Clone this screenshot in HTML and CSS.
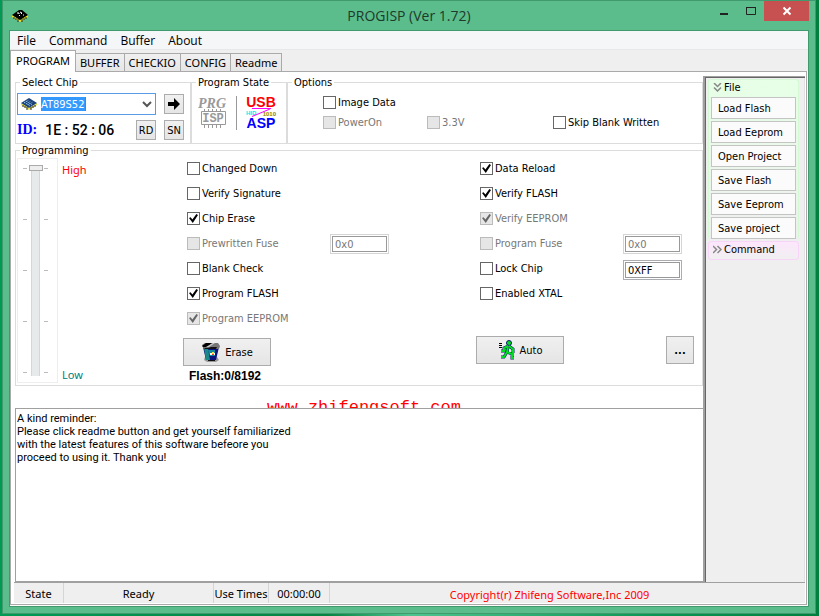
FILE: index.html
```html
<!DOCTYPE html>
<html lang="en">
<head>
<meta charset="utf-8">
<title>PROGISP (Ver 1.72)</title>
<link rel="stylesheet" href="styles.css">
</head>
<body>
<div class="window">
  <header class="titlebar">
    <svg class="app-icon" width="18" height="14" viewBox="0 0 18 14" aria-hidden="true">
      <path d="M1 6v2l8 5 8-5V6l-8 5z" fill="#f2e21c"/>
      <path d="M3 8v2M5 9v2M7 10v3M11 10v3M13 9v2M15 8v2" stroke="#222"/>
      <path d="M1 6l7-5h3l6 5-8 5z" fill="#000"/>
      <path d="M6 4h2v1M9 3l2 1-1 1M8 7l1-1M12 6h1" stroke="#fff" fill="none"/>
    </svg>
    <h1 class="title">PROGISP (Ver 1.72)</h1>
    <div class="caption-buttons">
      <button class="caption" aria-label="Minimize"><svg width="10" height="10" viewBox="0 0 10 10"><path d="M1 7h8v2H1z" fill="#222"/></svg></button>
      <button class="caption" aria-label="Maximize"><svg width="10" height="10" viewBox="0 0 10 10"><path d="M.5 1.500v7h9v-7z" fill="none" stroke="#222"/><path d="M0 1h10v1H0z" fill="#222"/></svg></button>
      <button class="caption close" aria-label="Close"><svg width="10" height="10" viewBox="0 0 10 10"><path d="M1.500 1.500l7 7M8.500 1.500l-7 7" stroke="#fff" stroke-width="2"/></svg></button>
    </div>
  </header>

  <div class="client">
    <nav class="menu">
      <a href="#">File</a><a href="#">Command</a><a href="#">Buffer</a><a href="#">About</a>
    </nav>
    <div class="tabs" role="tablist">
      <button class="tab active" role="tab" aria-selected="true">PROGRAM</button>
      <button class="tab" role="tab">BUFFER</button>
      <button class="tab" role="tab">CHECKIO</button>
      <button class="tab" role="tab">CONFIG</button>
      <button class="tab" role="tab">Readme</button>
    </div>

    <div class="page">
      <div class="workspace">
        <main class="main">
          <div class="top-groups">
            <fieldset class="group">
              <legend>Select Chip</legend>
              <div class="chip">
                <div class="chip-row">
                  <div class="combo">
                    <svg width="18" height="14" viewBox="0 0 18 14" aria-hidden="true">
                      <path d="M1 6v2l8 5 8-5V6l-8 5z" fill="#e8e23a"/>
                      <path d="M3 8v2M5 9v2M7 10v3M11 10v3M13 9v2M15 8v2" stroke="#223"/>
                      <path d="M1 6l8-5 8 5-8 5z" fill="#1c3f78"/>
                      <path d="M4 6l5-3M6 7l5-3M8 8l5-3M6 4l6 4M4 5l6 4" stroke="#8fc4ee" stroke-dasharray="1 1"/>
                    </svg>
                    <select class="chip-select" aria-label="Chip"><option>AT89S52</option></select>
                    <svg class="combo-arrow" width="10" height="8" viewBox="0 0 10 8" aria-hidden="true"><path d="M1 2l4 4 4-4" fill="none" stroke="#555" stroke-width="2"/></svg>
                  </div>
                  <button class="btn square" aria-label="Apply chip"><svg width="14" height="12" viewBox="0 0 14 12"><path d="M1 4h6V0l6 6-6 6V8H1z" fill="#000"/></svg></button>
                </div>
                <div class="chip-row">
                  <span class="id-label">ID:</span>
                  <output class="id-value">1E : 52 : 06</output>
                  <button class="btn square">RD</button>
                  <button class="btn square">SN</button>
                </div>
              </div>
            </fieldset>

            <fieldset class="group">
              <legend>Program State</legend>
              <div class="state">
                <svg width="32" height="34" viewBox="0 0 32 34">
                  <text x="0" y="12" class="prg">PRG</text>
                  <path d="M6.500 15v-2M10.500 15v-2M14.500 15v-2M18.500 15v-2M22.500 15v-2M6.500 29v3M10.500 29v3M14.500 29v3M18.500 29v3M22.500 29v3" stroke="#999"/>
                  <path d="M3.500 15.500h24v13h-24z" fill="none" stroke="#999"/>
                  <text x="15" y="26" class="isp">ISP</text>
                </svg>
                <span class="state-line"></span>
                <svg width="34" height="34" viewBox="0 0 34 34">
                  <text x="18" y="11" class="usb">USB</text>
                  <text x="3" y="19" class="hid">HID</text>
                  <text x="33" y="20" class="bits">1010</text>
                  <path d="M9 12.500h19M27 13L9 20.500" stroke="#f0f" fill="none"/>
                  <text x="18" y="32" class="asp">ASP</text>
                </svg>
              </div>
            </fieldset>

            <fieldset class="group">
              <legend>Options</legend>
              <div class="options">
                <label class="check wide"><input type="checkbox">Image Data</label>
                <label class="check"><input type="checkbox" disabled>PowerOn</label>
                <label class="check"><input type="checkbox" disabled>3.3V</label>
                <label class="check"><input type="checkbox">Skip Blank Written</label>
              </div>
            </fieldset>
          </div>

          <fieldset class="group">
            <legend>Programming</legend>
            <div class="programming">
              <div class="level">
                <div class="slider-box"><input class="slider" type="range" min="0" max="4" value="0" aria-label="Speed"></div>
                <div class="level-labels"><span class="high">High</span><span class="low">Low</span></div>
              </div>
              <div class="half">
                <div class="fields-row">
                  <div class="checks">
                    <label class="check"><input type="checkbox">Changed Down</label>
                    <label class="check"><input type="checkbox">Verify Signature</label>
                    <label class="check"><input type="checkbox" checked>Chip Erase</label>
                    <label class="check"><input type="checkbox" disabled>Prewritten Fuse</label>
                    <label class="check"><input type="checkbox">Blank Check</label>
                    <label class="check"><input type="checkbox" checked>Program FLASH</label>
                    <label class="check"><input type="checkbox" checked disabled>Program EEPROM</label>
                  </div>
                  <div class="values">
                    <input class="value" type="text" value="0x0" aria-label="Prewritten fuse value" disabled>
                  </div>
                </div>
                <div class="actions">
                  <button class="btn big">
                    <svg width="20" height="20" viewBox="0 0 20 20" aria-hidden="true">
                      <path d="M4 15h12l2 3-3 2H6l-3-2z" fill="#999"/>
                      <path d="M2 5h16l-3 13H5z" fill="#0b1280"/>
                      <path d="M3 6h4l2 12H5z" fill="#1b8a86"/>
                      <path d="M7 8h7v6H9z" fill="#128a9c"/>
                      <path d="M7 18h7v1H7z" fill="#111"/>
                      <path d="M9 11h2v2H9z" fill="#fff"/><path d="M11 10h2v2h-2z" fill="#fd3"/><path d="M11 12h2v1h-2z" fill="#e33"/><path d="M13 11h1v2h-1z" fill="#fff"/>
                      <path d="M1 3l3-2h13l2 3-1 3H3z" fill="#777"/>
                      <path d="M1 4l4-3h6L6 5H2z" fill="#000"/>
                      <path d="M5 5l7-4h2L8 5z" fill="#ccc"/><path d="M3 6h4l3-1h6l-1 2H4z" fill="#111"/>
                    </svg>Erase</button>
                  <output class="flash">Flash:0/8192</output>
                </div>
              </div>
              <div class="half">
                <div class="fields-row">
                  <div class="checks">
                    <label class="check"><input type="checkbox" checked>Data Reload</label>
                    <label class="check"><input type="checkbox" checked>Verify FLASH</label>
                    <label class="check"><input type="checkbox" checked disabled>Verify EEPROM</label>
                    <label class="check"><input type="checkbox" disabled>Program Fuse</label>
                    <label class="check"><input type="checkbox">Lock Chip</label>
                    <label class="check"><input type="checkbox">Enabled XTAL</label>
                  </div>
                  <div class="values">
                    <input class="value" type="text" value="0x0" aria-label="Program fuse value" disabled>
                    <input class="value" type="text" value="0XFF" aria-label="Lock chip value">
                  </div>
                </div>
                <div class="actions split">
                  <button class="btn big">
                    <svg width="18" height="20" viewBox="0 0 18 20" aria-hidden="true">
                      <path d="M1 3.500h3M1 5.500h3M1 7.500h3" stroke="#000"/>
                      <path d="M10 6L6 8v3H3M11 6l4 3v4M10 7l-1 5-3 5H3M9 12l5 2v4h2" fill="none" stroke="#0a1a6a" stroke-width="3"/>
                      <circle cx="11" cy="3" r="2.500" fill="#0d2" stroke="#0a1a6a"/>
                      <path d="M10 6L6 8v3H3M11 6l4 3v4M10 7l-1 5-3 5H3M9 12l5 2v4h2" fill="none" stroke="#0d2" stroke-width="2"/>
                    </svg>Auto</button>
                  <button class="btn more" aria-label="Auto settings">...</button>
                </div>
              </div>
            </div>
          </fieldset>

          <div class="site"><a href="#">www.zhifengsoft.com</a></div>
          <textarea class="memo" aria-label="Messages">A kind reminder:
Please click readme button and get yourself familiarized
with the latest features of this software befeore you
proceed to using it. Thank you!</textarea>
        </main>

        <aside class="side">
          <section class="card file">
            <h2><svg width="9" height="9" viewBox="0 0 9 9" aria-hidden="true"><path d="M1 0l3.500 3.500L8 0M1 4.500L4.500 8 8 4.500" fill="none" stroke="#888" stroke-width="1.500"/></svg>File</h2>
            <button>Load Flash</button>
            <button>Load Eeprom</button>
            <button>Open Project</button>
            <button>Save Flash</button>
            <button>Save Eeprom</button>
            <button>Save project</button>
          </section>
          <section class="card command">
            <h2><svg width="9" height="9" viewBox="0 0 9 9" aria-hidden="true"><path d="M0 1l3.500 3.500L0 8M4.500 1L8 4.500 4.500 8" fill="none" stroke="#888" stroke-width="1.500"/></svg>Command</h2>
          </section>
        </aside>
      </div>

      <footer class="status">
        <span class="cell">State</span>
        <span class="cell">Ready</span>
        <span class="cell">Use Times</span>
        <span class="cell">00:00:00</span>
        <span class="copyright">Copyright(r) Zhifeng Software,Inc 2009</span>
      </footer>
    </div>
  </div>
</div>
</body>
</html>
```
FILE: styles.css
```css
* { box-sizing: border-box; }

body {
  margin: 0;
  min-height: 100vh;
  padding: 0 3px 2px 2px;
  display: flex;
  background: linear-gradient(90deg, #009a55, #078343 40%, #4fc48e 50%, #0b9553 80%, #00803f);
  font: 11px/13px "DejaVu Sans Condensed", "DejaVu Sans", sans-serif;
  color: #000;
}

button, input, select, textarea { font: inherit; color: inherit; margin: 0; }
a { color: inherit; text-decoration: none; }
svg { display: block; flex: none; }

.window {
  flex: 1;
  display: flex;
  flex-direction: column;
  padding: 0 6px 6px;
  border: 1px solid #419a6e;
  background: #5bbd8b;
}

.titlebar {
  height: 29px;
  display: grid;
  grid-template-columns: 1fr auto 1fr;
  align-items: center;
}
.app-icon { margin-left: 2px; }
.title { margin: 0; font: 14px/20px "Open Sans", sans-serif; color: #1d3a2c; }
.caption-buttons { display: flex; align-self: start; justify-self: end; }
.caption {
  width: 27px;
  height: 20px;
  padding: 0;
  border: 0;
  background: none;
  display: flex;
  align-items: center;
  justify-content: center;
}
.close { width: 45px; background: #c75050; }

.client {
  flex: 1;
  display: flex;
  flex-direction: column;
  padding: 0 1px 1px 0;
  border: 1px solid #419a6e;
  background: #fff;
}

.menu {
  display: flex;
  gap: 13px;
  padding: 0 7px;
  margin-right: -1px;
  height: 19px;
  border-bottom: 1px solid #e8e8e8;
  background: #f4f6f8;
  font: 12px/19px "Open Sans", sans-serif;
}

.tabs {
  display: flex;
  align-items: flex-end;
  height: 21px;
  margin-right: -1px;
  background: #efefef;
  font: 11px/13px "Noto Sans", sans-serif;
}
.tab {
  height: 18px;
  padding: 0 4px;
  border: 1px solid #aaa;
  border-width: 1px 1px 0 0;
  background: linear-gradient(#f0f0f0, #e6e6e6);
}
.tab.active {
  height: 22px;
  margin-bottom: -1px;
  padding: 0 5px 3px;
  border-left-width: 1px;
  background: #fff;
  position: relative;
}

.page {
  flex: 1;
  display: flex;
  flex-direction: column;
  border: 1px solid #aaa;
  background: #fff;
  padding: 4px 1px 1px 3px;
}
.workspace { flex: 1; display: flex; }
.main { flex: 1; min-width: 0; display: flex; flex-direction: column; padding-left: 1px; }

.group { min-width: 0; margin: 0; padding: 0; border: 1px solid #dcdcdc; }
.group legend { margin-left: 4px; padding: 0 2px; }

.top-groups { display: grid; grid-template-columns: 176px 96px 1fr; height: 68px; }

.chip { padding: 4px 6px 0 1px; }
.chip-row { display: flex; align-items: center; gap: 8px; height: 22px; }
.chip-row + .chip-row { margin-top: 4px; }
.combo {
  flex: 1;
  display: flex;
  align-items: center;
  height: 22px;
  padding-left: 2px;
  border: 1px solid #569de5;
  background: #fff;
  position: relative;
}
.chip-select {
  flex: 1;
  height: 14px;
  margin-left: 3px;
  padding: 0;
  border: 0;
  appearance: none;
  color: #fff;
  background: linear-gradient(90deg, #39f 44px, #c60 44px) no-repeat left / 45px 14px;
}
.chip-select option { color: #000; }
.combo-arrow { position: absolute; right: 3px; pointer-events: none; }

.btn {
  display: flex;
  align-items: center;
  justify-content: center;
  padding: 0;
  border: 1px solid #acacac;
  background: linear-gradient(#f0f0f0, #e5e5e5);
}
.square { width: 20px; height: 20px; }
.big { width: 88px; height: 28px; gap: 4px; }
.more { width: 28px; height: 28px; font-weight: bold; }

.id-label { font: bold 14px/18px "Liberation Serif", serif; color: #00f; }
.id-value { flex: 1; font: 500 14px/18px Roboto, sans-serif; white-space: nowrap; }

.state { display: flex; align-items: center; gap: 6px; padding: 7px 4px 7px 6px; }
.state-line { width: 1px; height: 34px; background: #999; }
.prg { font: italic bold 14px "Liberation Serif", serif; fill: #999; }
.isp { font: bold 12px "Liberation Mono", monospace; fill: #999; text-anchor: middle; }
.usb, .asp { font: bold 14px "Liberation Sans", sans-serif; text-anchor: middle; }
.usb { fill: #f00; }
.asp { fill: #00f; }
.hid { font: bold 6px "Liberation Sans", sans-serif; fill: #0ee; }
.bits { font: bold 6px "Liberation Sans", sans-serif; fill: #880; text-anchor: end; }

.options {
  display: grid;
  grid-template-columns: 104px 126px 1fr;
  grid-auto-rows: 20px;
  padding: 3px 0 0 35px;
}
.wide { grid-column: 1 / -1; }

.check { display: flex; align-items: center; gap: 2px; white-space: nowrap; }
.check input {
  appearance: none;
  flex: none;
  width: 13px;
  height: 13px;
  border: 1px solid #666;
  background: #fff;
}
.check input:checked::before {
  content: "";
  display: block;
  width: 9px;
  height: 9px;
  margin: 1px;
  background: #000;
  clip-path: polygon(0 45%, 18% 35%, 38% 62%, 82% 0, 100% 12%, 42% 100%);
}
.check:has(:disabled) { color: #777; }
.check input:disabled { border-color: #bbb; background: #e6e6e6; }
.check input:disabled:checked::before { background: #666; }

.programming {
  display: grid;
  grid-template-columns: 167px 293fr 218fr;
  padding: 1px 8px 2px 0;
}
.level { display: flex; gap: 4px; padding-left: 1px; }
.slider-box {
  display: flex;
  width: 41px;
  height: 225px;
  padding: 6px 0 6px 10px;
  border: 1px solid #eee;
  background:
    repeating-linear-gradient(#bbb 0 1px, transparent 1px 51px) 5px 9px / 4px 205px no-repeat,
    repeating-linear-gradient(#bbb 0 1px, transparent 1px 51px) 26px 9px / 4px 205px no-repeat;
}
.slider {
  appearance: none;
  writing-mode: vertical-lr;
  width: 15px;
  height: 211px;
  background: linear-gradient(#e7eaea, #e7eaea) center / 7px 100% no-repeat, linear-gradient(#d6d6d6, #d6d6d6) center / 9px 100% no-repeat;
}
.slider::-webkit-slider-thumb {
  appearance: none;
  width: 14px;
  height: 6px;
  border: 1px solid #aaa;
  background: #eee;
}
.level-labels {
  display: flex;
  flex-direction: column;
  justify-content: space-between;
  height: 225px;
  padding: 5px 0 2px;
  font: 11px/13px "Noto Sans", sans-serif;
}
.high { color: #f00; }
.low { color: #008080; }

.fields-row { display: flex; }
.checks { display: grid; grid-auto-rows: 25px; width: 147px; padding-left: 4px; margin-top: -2px; }
.values { display: flex; flex-direction: column; gap: 6px; padding-top: 76px; }
.value {
  width: 59px;
  height: 20px;
  padding: 1px 4px 0;
  border: 1px solid #abadb3;
  box-shadow: inset 0 0 0 1px #fff, inset 0 0 0 2px #999;
  background: #fff;
}
.value:disabled { border-color: #d5d5d5; color: #777; }
.actions { display: flex; flex-direction: column; align-items: flex-start; gap: 4px; margin-top: 7px; }
.split { flex-direction: row; justify-content: space-between; margin-top: 30px; }
.flash { padding-left: 6px; font: bold 12px/13px "Liberation Sans", sans-serif; }

.site {
  height: 22px;
  padding: 12px 0 0 10px;
  overflow: hidden;
  text-align: center;
  font: 17px/20px "Liberation Mono", monospace;
  color: #f00;
}
.memo {
  flex: 1;
  min-height: 100px;
  padding: 3px 1px;
  border: 1px solid #a0a0a0;
  border-right: 0;
  resize: none;
  outline: 0;
  font: 11px/13px Roboto, sans-serif;
}

.side {
  width: 102px;
  border: solid #a0a0a0;
  border-width: 1px 0 0 2px;
  box-shadow: inset 1px 1px 0 #666, inset -1px 0 0 #e0e0e0;
  background: #efefef;
  padding: 2px 6px 0 3px;
}
.card { padding: 0 2px; border-radius: 3px; }
.card h2 { display: flex; align-items: center; gap: 2px; height: 17px; margin: 0; padding: 0 0 3px 2px; font: inherit; }
.file { border: 1px solid #d5f8d5; border-bottom: 0; background: linear-gradient(#e6ffe6, #efefef); }
.file button {
  display: block;
  width: 100%;
  height: 22px;
  margin-bottom: 2px;
  padding: 0 6px;
  border: 1px solid #c4c4c4;
  background: #fbfbfb;
  text-align: left;
}
.command { border: 1px solid #f8d5f8; background: linear-gradient(#fce6fc, #f0f0f0); }

.status {
  display: flex;
  height: 21px;
  border-top: 1px solid #a0a0a0;
  background: #efefef;
  font: 11px/21px "Noto Sans", sans-serif;
  white-space: nowrap;
}
.cell { width: 50px; text-align: center; border-right: 1px solid #d5d5d5; overflow: hidden; }
.cell:nth-child(2) { width: 150px; }
.cell:nth-child(3) { width: 55px; }
.cell:nth-child(4) { width: 61px; }
.copyright { flex: 1; padding-right: 36px; text-align: center; line-height: 23px; color: #f00; }
```
